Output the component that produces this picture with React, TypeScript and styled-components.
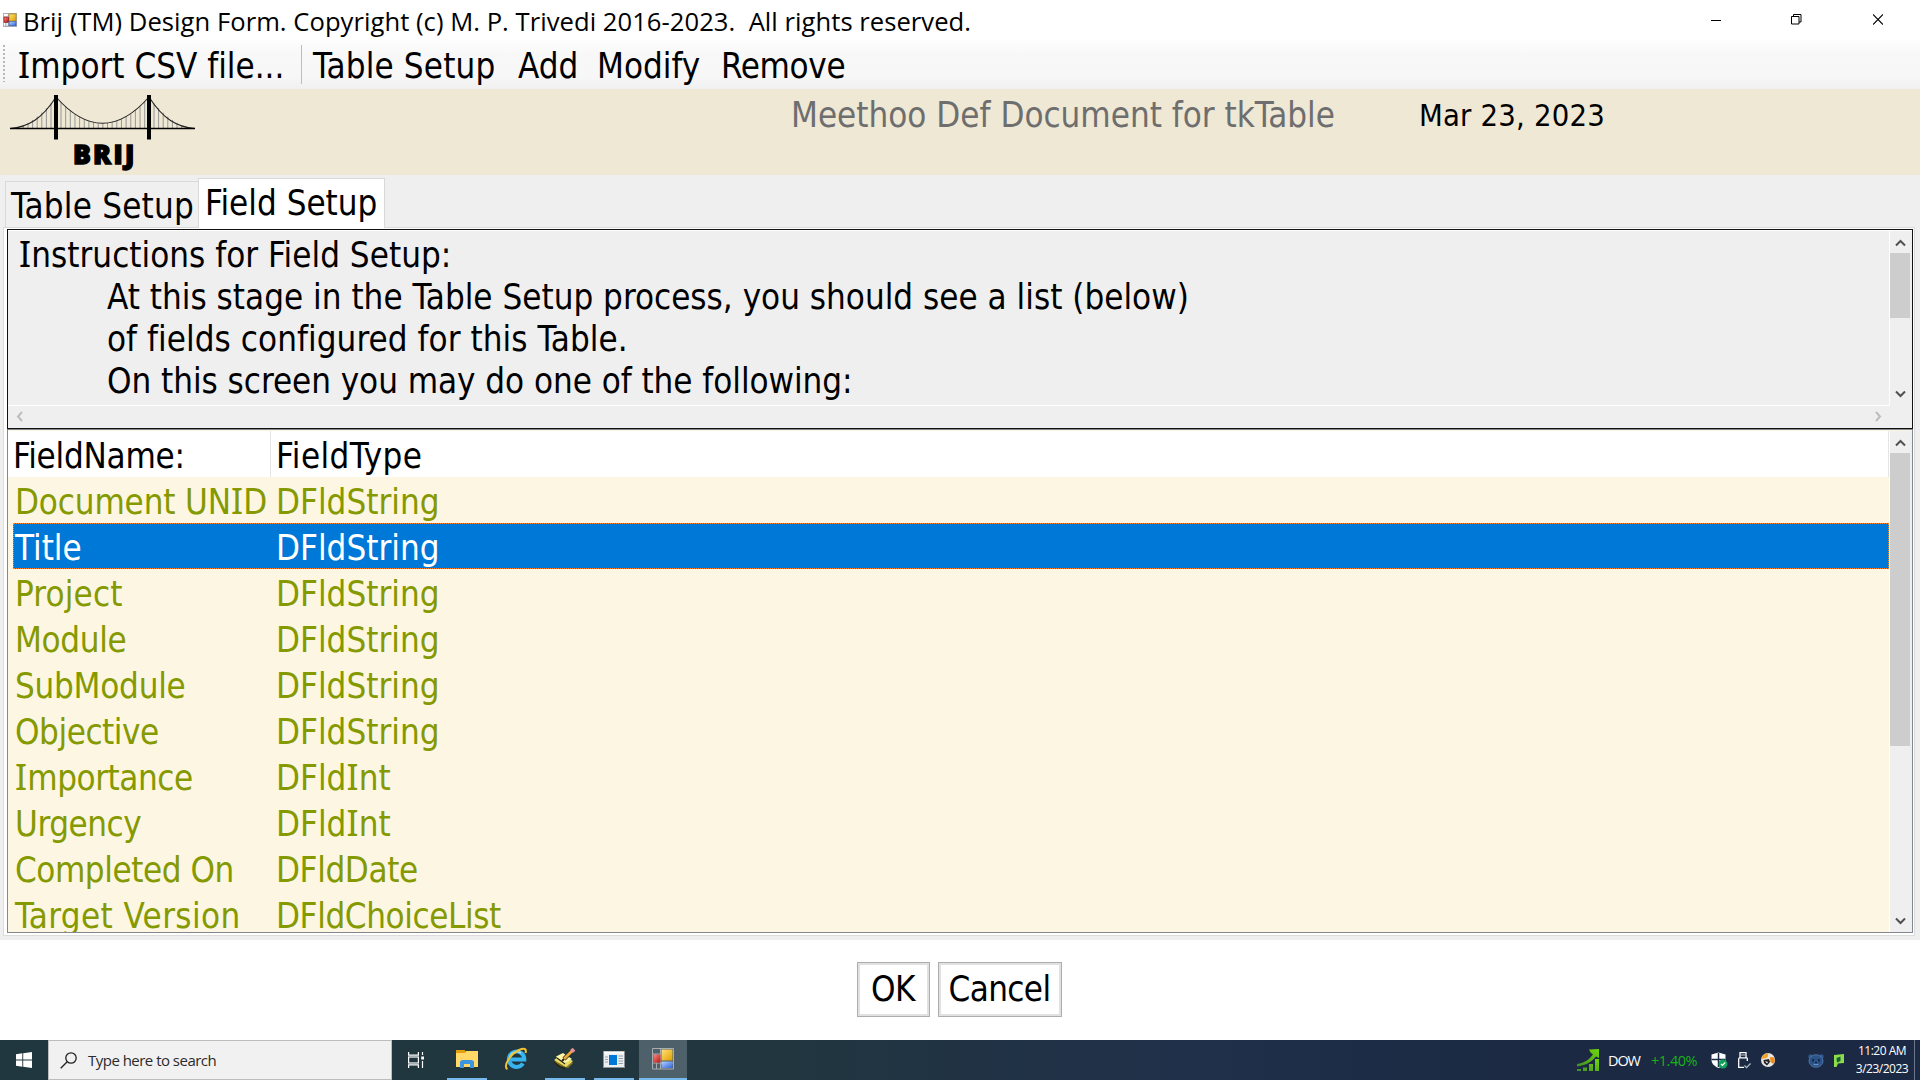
import React from 'react';
import styled, { createGlobalStyle } from 'styled-components';

const Global = createGlobalStyle`
  * { box-sizing: border-box; }
  body { margin: 0; background: #fff; overflow: hidden; }
`;

const Screen = styled.div`
  display: flex;
  flex-direction: column;
  width: 1920px;
  height: 1080px;
  background: #fff;
  color: #000;
  font-family: 'DejaVu Sans Condensed', 'DejaVu Sans', sans-serif;
  font-size: 34.67px;
  line-height: 42px;
  font-variant-ligatures: none;
  white-space: pre;
`;

/* Text run with its own tracking */
const Text = styled.span<{ $track?: number }>`
  letter-spacing: ${(p) => p.$track ?? 0}px;
`;

const SlabI = styled.span`
  font-family: 'Noto Sans', sans-serif;
  font-size: 35.5px;
  line-height: 0;
  letter-spacing: 0.2px;
`;

/* ---------- title bar ---------- */

const TitleBar = styled.header`
  display: flex;
  align-items: center;
  height: 40px;
  flex: none;
  padding-left: 3px;
`;

const TitleText = styled.h1`
  flex: 1;
  margin: 4px 0 0 6px;
  font: 400 25.6px/36px 'Open Sans', sans-serif;
  letter-spacing: 0.04px;
`;

const WindowButtons = styled.div`
  display: flex;
  width: 250px;
  height: 38px;
  align-items: center;
  justify-content: space-between;
  padding: 0 37px 2px 41px;
`;

/* ---------- toolbar ---------- */

const Toolbar = styled.nav`
  display: flex;
  height: 49px;
  flex: none;
  padding: 3px 0 0 3px;
  background: linear-gradient(#fdfdfd, #f8f8f8 30%, #f7f7f7 75%, #f0f0f0);
`;

const Grip = styled.div`
  width: 2px;
  height: 39px;
  margin-right: 13px;
  background: repeating-linear-gradient(transparent 0 2px, #b8b8b8 2px 4px);
`;

const ToolItem = styled.div<{ $width: number }>`
  width: ${(p) => p.$width}px;
  padding-top: 2px;
`;

const Separator = styled.div`
  width: 1px;
  height: 39px;
  margin: 2px 11px 0 0;
  background: #bdbdbd;
`;

/* ---------- banner ---------- */

const Banner = styled.section`
  display: flex;
  height: 86px;
  flex: none;
  background: #efe8d5;
`;

const LogoBox = styled.div`
  width: 791px;
`;

const DocTitle = styled.div`
  width: 628px;
  padding-top: 5px;
  color: #6e6e6e;
`;

const DocDate = styled.div`
  padding-top: 6px;
  font-size: 30.67px;
  letter-spacing: 0.2px;
`;

/* ---------- tabs ---------- */

const Workspace = styled.main`
  display: flex;
  flex-direction: column;
  height: 765px;
  flex: none;
  padding: 3px 5px 4px 3px;
  background: #efefef;
`;

const TabStrip = styled.div`
  display: flex;
  align-items: flex-end;
  height: 50px;
  margin-bottom: -1px;
  padding-left: 2px;
  flex: none;
`;

const Tab = styled.div<{ $active?: boolean }>`
  position: relative;
  width: ${(p) => (p.$active ? 187 : 193)}px;
  height: ${(p) => (p.$active ? 50 : 47)}px;
  padding: ${(p) => (p.$active ? '3px 0 0 6px' : '3px 0 0 5px')};
  border: 1px solid #d9d9d9;
  border-bottom-width: ${(p) => (p.$active ? 0 : 1)}px;
  border-right-width: ${(p) => (p.$active ? 1 : 0)}px;
  background: ${(p) => (p.$active ? '#fff' : '#f0f0f0')};
`;

const TabPanel = styled.div`
  display: flex;
  flex-direction: column;
  flex: 1;
  min-height: 0;
  padding: 1px 1px 2px 3px;
  border: 1px solid #dcdcdc;
  background: #fff;
`;

/* ---------- instructions ---------- */

const Instructions = styled.section`
  display: grid;
  grid-template: 174px 1px 22px / 1fr 1px 22px;
  height: 200px;
  flex: none;
  padding-top: 1px;
  border: 1px solid #111;
  background: #fff;
  > * { background: #efefef; }
`;

const Copy = styled.div`
  padding: 3px 0 0 11px;
  overflow: hidden;
`;

const Line = styled.div<{ $indent?: boolean }>`
  height: 42px;
  padding-left: ${(p) => (p.$indent ? 88 : 0)}px;
`;

const Rule = styled.div`
  && { background: #fff; }
`;

const HorizontalBar = styled.div`
  display: flex;
  align-items: center;
  justify-content: space-between;
  grid-column: 1 / -1;
  padding: 0 30px 1px 8px;
`;

const VerticalBar = styled.div`
  display: flex;
  flex-direction: column;
  align-items: center;
  padding: 8px 2px 7px 0;
  background: #efefef;
`;

const Thumb = styled.div<{ $height: number }>`
  width: 20px;
  height: ${(p) => p.$height}px;
  margin: 6px 0 auto;
  background: #cdcdcd;
`;

/* ---------- field list ---------- */

const ListFrame = styled.section`
  display: grid;
  grid-template-columns: 1881px 1px 22px;
  height: 504px;
  flex: none;
  padding-top: 1px;
  border: 1px solid #828790;
  background: #fdf6e3;
  overflow: hidden;
`;

const List = styled.div`
  height: 501px;
  overflow: hidden;
`;

const Gutter = styled.div`
  background: #fff;
`;

const HeadRow = styled.div`
  display: grid;
  grid-template-columns: 263px 1fr;
  height: 46px;
  background: #fff;
  border-right: 1px solid #e5e5e5;
`;

const HeadCell = styled.div<{ $first?: boolean }>`
  padding: 4px 0 0 5px;
  border-right: ${(p) => (p.$first ? '1px solid #e5e5e5' : '0')};
`;

const Row = styled.div<{ $selected?: boolean }>`
  display: grid;
  grid-template-columns: 257px 1fr;
  height: 46px;
  margin-left: 5px;
  border: 1px ${(p) => (p.$selected ? 'dotted #ff8728' : 'solid transparent')};
  background: ${(p) => (p.$selected ? '#0078d7' : 'transparent')};
  background-clip: border-box;
  color: ${(p) => (p.$selected ? '#fff' : '#859900')};
`;

const Cell = styled.div<{ $pad?: number }>`
  padding: 3px 0 0 ${(p) => p.$pad ?? 4}px;
  margin-left: -1px;
`;

/* ---------- dialog buttons ---------- */

const Actions = styled.footer`
  display: flex;
  gap: 8px;
  height: 100px;
  flex: none;
  padding: 22px 0 0 857px;
`;

const Button = styled.button<{ $width: number }>`
  width: ${(p) => p.$width}px;
  height: 55px;
  padding: 0 1px 1px 0;
  border: 1px solid #adadad;
  box-shadow: inset 0 0 0 2px #e1e1e1;
  background: #fff;
  color: #000;
  font: inherit;
  text-align: center;
`;

/* ---------- taskbar ---------- */

const Taskbar = styled.div`
  display: flex;
  height: 40px;
  flex: none;
  background: linear-gradient(90deg, #20373f, #21363f 40%, #20304a 62%, #1b2942 80%, #1b2944);
  font-family: 'Open Sans', sans-serif;
  color: #fff;
  line-height: 20px;
`;

const StartButton = styled.div`
  width: 48px;
  padding: 12px 16px;
  display: flex;
`;

const SearchBox = styled.div`
  display: flex;
  align-items: center;
  width: 344px;
  padding-left: 11px;
  gap: 11px;
  border: 1px solid #bdbdbd;
  background: #f1f1f1;
  color: #2b2b2b;
  font-size: 15px;
  letter-spacing: -0.52px;
`;

const TaskButton = styled.div<{ $running?: boolean; $active?: boolean }>`
  display: flex;
  align-items: center;
  justify-content: center;
  width: ${(p) => (p.$active ? 48 : 40)}px;
  height: 40px;
  margin-left: ${(p) => (p.$active ? 5 : 9)}px;
  background: ${(p) => (p.$active ? '#4e6069' : 'transparent')};
  border-bottom: 2px solid ${(p) => (p.$running || p.$active ? '#76b9ed' : 'transparent')};
`;

const TaskViewButton = styled.div`
  display: flex;
  align-items: center;
  width: 46px;
  padding-left: 16px;
`;

const Tray = styled.div`
  display: flex;
  align-items: center;
  width: 343px;
  margin-left: auto;
`;

const Quote = styled.span<{ $up?: boolean }>`
  width: ${(p) => (p.$up ? 60 : 43)}px;
  margin-left: ${(p) => (p.$up ? 0 : 9)}px;
  padding-top: 1px;
  font-size: 14.5px;
  letter-spacing: ${(p) => (p.$up ? -0.5 : -1.1)}px;
  color: ${(p) => (p.$up ? '#17b317' : '#fff')};
`;

const TrayIcons = styled.div`
  display: flex;
  align-items: center;
  gap: 10px;
  width: 141px;
`;

const OverflowIcons = styled.div`
  display: flex;
  align-items: center;
  gap: 10px;
  margin-left: 23px;
`;

const Clock = styled.div`
  display: flex;
  flex-direction: column;
  align-items: center;
  width: 60px;
  font-size: 12px;
  line-height: 18px;
  letter-spacing: -0.5px;
`;

const ShowDesktop = styled.div`
  width: 1px;
  height: 40px;
  margin-left: 2px;
  background: #6d7688;
`;

/* ---------- drawings ---------- */

const FormIcon = ({ size }: { size: number }) => (
  <svg width={size} height={size} viewBox="0 0 22 22">
    <defs>
      <linearGradient id="fy" x1="0" y1="0" x2="1" y2="1"><stop offset="0" stopColor="#ffe27a" /><stop offset="1" stopColor="#dfa000" /></linearGradient>
      <linearGradient id="fr" x1="0" y1="0" x2="1" y2="1"><stop offset="0" stopColor="#ff8a80" /><stop offset="1" stopColor="#b31414" /></linearGradient>
      <linearGradient id="fb" x1="0" y1="0" x2="1" y2="1"><stop offset="0" stopColor="#b5d3ff" /><stop offset="1" stopColor="#2f63dc" /></linearGradient>
    </defs>
    <path d="M0.5 0.5h21v20.5H0.5zM8.5 0.5v20.5M0.5 6h8M0.5 15h21M4.5 15v6" fill="none" stroke="#a9adb1" strokeWidth={size < 20 ? 1.8 : 1} />
    <rect x="9.5" y="1.5" width="11" height="11" fill="url(#fy)" stroke={size < 20 ? '#a87800' : 'none'} />
    <rect x="1.5" y="6.5" width="7" height="8" fill="url(#fr)" stroke={size < 20 ? '#8c1010' : 'none'} />
    <rect x="9.5" y="13.5" width="11" height="6.5" fill="url(#fb)" stroke={size < 20 ? '#2850b0' : 'none'} />
  </svg>
);

const Chevron = ({ dir, faint }: { dir: 'up' | 'down' | 'left' | 'right'; faint?: boolean }) => {
  const d = {
    up: 'M1 6.5L5.5 2L10 6.5',
    down: 'M1 1.5L5.5 6L10 1.5',
    left: 'M6 1L2 5.5L6 10',
    right: 'M2 1L6 5.5L2 10',
  }[dir];
  const flat = dir === 'up' || dir === 'down';
  return (
    <svg width={flat ? 11 : 8} height={flat ? 8 : 11} flexShrink={0}>
      <path d={d} fill="none" stroke={faint ? '#bdbdbd' : '#505050'} strokeWidth={flat ? 2 : 2} />
    </svg>
  );
};

const mainCableY = (x: number) => {
  const t = (x - 56) / 93;
  return 97 * (1 - t) * (1 - t) + 149.6 * 2 * t * (1 - t) + 97 * t * t;
};
const sideCableY = (d: number) => 128 - 31 * Math.pow(1 - d / 46, 1.9);
const hangers: [number, number][] = [];
for (let d = 5; d < 40; d += 4.6) {
  hangers.push([56 - d, sideCableY(d)], [149 + d, sideCableY(d)]);
}
for (let x = 61; x < 146; x += 4.65) hangers.push([x, mainCableY(x)]);

const BridgeLogo = () => (
  <svg width="200" height="86" viewBox="0 89 200 86">
    {hangers.map(([x, y]) => (
      <path key={x} d={`M${x} ${y}V128`} stroke="#8d8d8d" strokeWidth="0.9" />
    ))}
    <path
      d="M10 128.5C28 127 42 119 56 97Q102.500 149.600 149 97C163 119 177 127 195 128.500"
      fill="none" stroke="#222" strokeWidth="1.1"
    />
    <path d="M10 128.5H195" stroke="#000" strokeWidth="1.5" />
    <path d="M56 95V139.500M149 95V139.500" stroke="#000" strokeWidth="4" />
    <text y="163.500" fontFamily="'Open Sans', sans-serif" fontWeight="800" fontSize="26.5" stroke="#000" strokeWidth="1.4">
      <tspan x="73">B</tspan><tspan x="93">R</tspan><tspan x="113.500">I</tspan><tspan x="125">J</tspan>
    </text>
  </svg>
);

const MinimizeIcon = () => <svg width="10" height="11"><path d="M0 6.5H10" stroke="#000" /></svg>;
const RestoreIcon = () => (
  <svg width="13" height="11"><path d="M0.5 2.500h7.500v7.500h-7.500zM2.500 2.500v-2h7.500v7.500h-2" fill="none" stroke="#000" /></svg>
);
const CloseIcon = () => <svg width="10" height="11"><path d="M0 0.5L10 10.500M10 0.500L0 10.500" stroke="#000" strokeWidth="1.1" /></svg>;

const WindowsIcon = () => (
  <svg width="16" height="16"><path d="M0 2.200L6.300 1.300V7.500H0zM7.200 1.200L16 0V7.500H7.200zM0 8.500H6.300V14.700L0 13.800zM7.200 8.500H16V16L7.200 14.800z" fill="#fff" /></svg>
);
const SearchIcon = () => (
  <svg width="17" height="17"><circle cx="11" cy="6" r="5.200" fill="none" stroke="#222" strokeWidth="1.300" /><path d="M7.200 9.800L0.700 16.300" stroke="#222" strokeWidth="1.300" /></svg>
);
const TaskViewIcon = () => (
  <svg width="17" height="16" fill="none" stroke="#fff" strokeWidth="1.200">
    <path d="M0.600 0V3.200H10.400V0M0.600 16V12.800H10.400V16" />
    <rect x="0.600" y="5" width="9.800" height="6" />
    <path d="M14.500 0V3M14.500 9V16" /><rect x="13.200" y="4.500" width="2.800" height="3" fill="#fff" stroke="none" />
  </svg>
);
const FolderIcon = () => (
  <svg width="22" height="18">
    <path d="M0 0H8L10 2H22V17H0z" fill="#f0b429" /><path d="M0 3H9L10 1H22V17H0z" fill="#ffd868" />
    <path d="M0 0H8.500L9.500 1L8.500 3H0z" fill="#e39f10" />
    <path d="M4 18V11.500L6 10H16L18 11.500V18H14V14H8V18z" fill="#3b95e0" />
  </svg>
);
const ExplorerIcon = () => (
  <svg width="24" height="24">
    <path d="M19 16.500A7.700 7.700 0 1 1 20.300 12.500H7" fill="none" stroke="#37b3ee" strokeWidth="4" />
    <path d="M5.500 11A7.500 7.500 0 0 1 17 6" fill="none" stroke="#9fe3ff" strokeWidth="1.500" />
    <path d="M3.500 22C-1.500 20 6 7 15 3C20 0.800 23 1.500 21.500 6" fill="none" stroke="#f1c232" strokeWidth="2" />
  </svg>
);
const NotesIcon = () => (
  <svg width="24" height="22">
    <path d="M1 14L8 18L15 20L20 15L13 9z" fill="#8c7a1c" />
    <path d="M1 12L8 7L20 13L13 19z" fill="#e9dc6a" /><path d="M3 8.500L10 5L19 11L10 16z" fill="#fff6a3" />
    <path d="M1 14L6 18M5 18L12 21M4 10L12 16" stroke="#28240a" strokeWidth="1.200" />
    <path d="M11 11L19 3" stroke="#222" strokeWidth="4.200" /><path d="M11 11L19 3" stroke="#e9a93a" strokeWidth="2.800" />
    <path d="M18.500 3.500L21 1.200" stroke="#e8909a" strokeWidth="4" /><path d="M9 13L11 11" stroke="#222" strokeWidth="2" />
  </svg>
);
const WindowAppIcon = () => (
  <svg width="22" height="17">
    <rect x="0.500" y="0.500" width="21" height="16" fill="#eceff1" stroke="#8a9094" />
    <path d="M1 1.500H21" stroke="#fff" strokeWidth="2" /><rect x="6" y="4" width="8" height="10" fill="#0078d7" />
    <path d="M2 6H5M2 8.500H5M2 11H5M15.500 5H20M15.500 7.500H20M15.500 10H20M15.500 12.500H20" stroke="#9aa0a5" />
  </svg>
);
const StockIcon = () => (
  <svg width="22" height="22">
    <defs><linearGradient id="st" x1="0" y1="1" x2="1" y2="0"><stop offset="0" stopColor="#3f8f26" /><stop offset="1" stopColor="#6fd60a" /></linearGradient></defs>
    <path d="M0 22V20H4V22zM6 22V18.500H10V22zM12 22V15H16V22zM18 22V10H22V22z" fill="url(#st)" />
    <path d="M0 15C8 14 12 10.500 16 5.500L13.500 3.500L12 0.500L22 0V9L19 7.500C14 13.500 8 16.500 0 17.500z" fill="url(#st)" />
  </svg>
);
const ShieldIcon = () => (
  <svg width="17" height="17">
    <path d="M7.500 0.500L14.500 2.500V8C14.500 12 11 14.500 7.500 16C4 14.500 0.500 12 0.500 8V2.500z" fill="#fff" />
    <path d="M7.500 1V15M0.500 7.500H14.500" stroke="#1b2944" strokeWidth="1.500" />
    <circle cx="12" cy="12" r="4.500" fill="#12a05a" /><path d="M10 12L11.500 13.500L14.200 10.500" fill="none" stroke="#fff" strokeWidth="1.200" />
  </svg>
);
const UsbIcon = () => (
  <svg width="13" height="17" fill="none" stroke="#fff" strokeWidth="1.300">
    <path d="M2 6V0.700H8V6" /><path d="M3.500 3H4.500M5.500 3H6.500" />
    <path d="M9.300 9V6.500Q9.300 5.800 8.300 5.800H1.700Q0.700 5.800 0.700 6.800V15.300H6" /><path d="M6.500 13.500L8.500 15.600L12.600 11.500" stroke="#b5bcc8" />
  </svg>
);
const BallIcon = () => (
  <svg width="14" height="14">
    <circle cx="7" cy="7" r="7" fill="#e6e6e6" /><path d="M1.500 3Q4 0 7.500 0.300L6.500 4.500L1 6z" fill="#f5a11c" />
    <path d="M9 4L13 4.500Q14.500 8 12.500 11L9.500 9z" fill="#f08c14" /><path d="M2.500 7L8 6L9 9L6 12.500L3 10z" fill="#222" />
    <path d="M4 8L7 9L6 10.500z" fill="#fff" />
  </svg>
);
const BearIcon = () => (
  <svg width="16" height="15">
    <circle cx="2.500" cy="3.500" r="2.200" fill="#31588a" /><circle cx="13.500" cy="3.500" r="2.200" fill="#31588a" />
    <ellipse cx="8" cy="8" rx="7" ry="6.300" fill="#2c5387" stroke="#5683b5" strokeWidth="0.800" />
    <path d="M5 6V8.500M11 6V8.500" stroke="#0e2038" strokeWidth="1.500" />
    <path d="M5.500 11.500H10.500" stroke="#6c93c0" strokeWidth="1.200" /><path d="M7 9.500H9" stroke="#12284a" strokeWidth="1.400" />
  </svg>
);
const LeafIcon = () => (
  <svg width="10" height="13"><path d="M0 1L10 0V9L4 9.500L2.500 13H0z" fill="#8ddc4a" /><path d="M2.500 4L6.500 2.500V7L3 8.500z" fill="#15603a" /></svg>
);

/* ---------- data ---------- */

const fields: { name: React.ReactNode; type: string; nameTrack?: number; typeTrack?: number }[] = [
  { name: <>Document UN<SlabI>I</SlabI>D</>, type: 'DFldString', nameTrack: -0.15 },
  { name: 'Title', type: 'DFldString' },
  { name: 'Project', type: 'DFldString', nameTrack: 0.15 },
  { name: 'Module', type: 'DFldString', nameTrack: -0.35 },
  { name: 'SubModule', type: 'DFldString', nameTrack: -0.25 },
  { name: 'Objective', type: 'DFldString', nameTrack: -0.45 },
  { name: <><SlabI>I</SlabI>mportance</>, type: 'int', nameTrack: -0.45 },
  { name: 'Urgency', type: 'int', nameTrack: -0.45 },
  { name: 'Completed On', type: 'DFldDate', nameTrack: -0.45, typeTrack: -0.4 },
  { name: 'Target Version', type: 'DFldChoiceList', nameTrack: 0.4, typeTrack: -0.4 },
];
const selected = 1;

export default function App() {
  return (
    <Screen>
      <Global />
      <TitleBar>
        <FormIcon size={14} />
        <TitleText>{'Brij (TM) Design Form. Copyright (c) M. P. Trivedi 2016-2023.  All rights reserved.'}</TitleText>
        <WindowButtons><MinimizeIcon /><RestoreIcon /><CloseIcon /></WindowButtons>
      </TitleBar>

      <Toolbar>
        <Grip />
        <ToolItem $width={283}><SlabI>I</SlabI>mport CSV file...</ToolItem>
        <Separator />
        <ToolItem $width={205}><Text $track={0.15}>Table Setup</Text></ToolItem>
        <ToolItem $width={79}>Add</ToolItem>
        <ToolItem $width={124}>Modify</ToolItem>
        <ToolItem $width={130}><Text $track={-0.35}>Remove</Text></ToolItem>
      </Toolbar>

      <Banner>
        <LogoBox><BridgeLogo /></LogoBox>
        <DocTitle>Meethoo Def Document for tkTable</DocTitle>
        <DocDate>Mar 23, 2023</DocDate>
      </Banner>

      <Workspace>
        <TabStrip>
          <Tab><Text $track={0.2}>Table Setup</Text></Tab>
          <Tab $active>Field Setup</Tab>
        </TabStrip>
        <TabPanel>
          <Instructions>
            <Copy>
              <Line><Text $track={0.02}><SlabI>I</SlabI>nstructions for Field Setup:</Text></Line>
              <Line $indent>At this stage in the Table Setup process, you should see a list (below)</Line>
              <Line $indent><Text $track={0.05}>of fields configured for this Table.</Text></Line>
              <Line $indent><Text $track={-0.05}>On this screen you may do one of the following:</Text></Line>
            </Copy>
            <Rule />
            <VerticalBar><Chevron dir="up" /><Thumb $height={65} /><Chevron dir="down" /></VerticalBar>
            <Rule /><Rule /><div />
            <HorizontalBar><Chevron dir="left" faint /><Chevron dir="right" faint /></HorizontalBar>
          </Instructions>
          <ListFrame>
            <List>
              <HeadRow>
                <HeadCell $first><Text $track={-0.25}>FieldName:</Text></HeadCell>
                <HeadCell><Text $track={0.4}>FieldType</Text></HeadCell>
              </HeadRow>
              {fields.map((f, i) => (
                <Row key={i} $selected={i === selected}>
                  <Cell $pad={2}><Text $track={f.nameTrack}>{f.name}</Text></Cell>
                  <Cell $pad={6}>
                    <Text $track={f.typeTrack}>{f.type === 'int' ? <>DFld<SlabI>I</SlabI>nt</> : f.type}</Text>
                  </Cell>
                </Row>
              ))}
            </List>
            <Gutter />
            <VerticalBar><Chevron dir="up" /><Thumb $height={293} /><Chevron dir="down" /></VerticalBar>
          </ListFrame>
        </TabPanel>
      </Workspace>

      <Actions>
        <Button $width={73}><Text $track={-0.6}>OK</Text></Button>
        <Button $width={124}><Text $track={-0.6}>Cancel</Text></Button>
      </Actions>

      <Taskbar>
        <StartButton><WindowsIcon /></StartButton>
        <SearchBox><SearchIcon />Type here to search</SearchBox>
        <TaskViewButton><TaskViewIcon /></TaskViewButton>
        <TaskButton $running><FolderIcon /></TaskButton>
        <TaskButton><ExplorerIcon /></TaskButton>
        <TaskButton $running><NotesIcon /></TaskButton>
        <TaskButton $running><WindowAppIcon /></TaskButton>
        <TaskButton $active><FormIcon size={22} /></TaskButton>
        <Tray>
          <StockIcon />
          <Quote>DOW</Quote>
          <Quote $up>+1.40%</Quote>
          <TrayIcons>
            <ShieldIcon /><UsbIcon /><BallIcon />
            <OverflowIcons><BearIcon /><LeafIcon /></OverflowIcons>
          </TrayIcons>
          <Clock><span>11:20 AM</span><span>3/23/2023</span></Clock>
          <ShowDesktop />
        </Tray>
      </Taskbar>
    </Screen>
  );
}
